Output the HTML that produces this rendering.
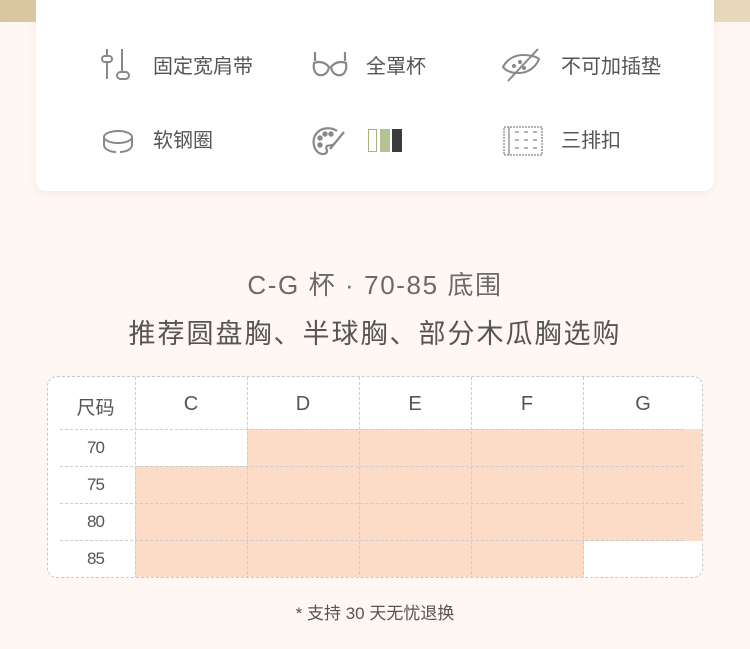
<!DOCTYPE html>
<html><head><meta charset="utf-8">
<style>
*{margin:0;padding:0;box-sizing:border-box}
body{width:750px;height:649px;background:#fff7f3;position:relative;overflow:hidden;font-family:"Liberation Sans","Noto Sans CJK SC",sans-serif;color:#555}
.top{position:absolute;left:0;top:0;width:750px;height:22px;background:linear-gradient(90deg,#d9c6a0,#e6d6b8 50%,#e8d9bd)}
.card{position:absolute;left:36px;top:-10px;width:678px;height:201px;background:#fff;border-radius:10px;box-shadow:0 2px 8px rgba(220,190,170,.25)}
.it{position:absolute;font-size:20px;color:#555;line-height:24px}
.ic{position:absolute}
.h1{position:absolute;left:0;width:750px;top:265px;text-align:center;font-size:26px;color:#6a6a6a;letter-spacing:1.6px}
.h2{position:absolute;left:0;width:750px;top:312px;text-align:center;font-size:27px;color:#555;letter-spacing:2px}
.tbl{position:absolute;left:47px;top:376px;width:656px;height:202px;border:1px dashed #c8c8c8;border-radius:10px;background:#fff;overflow:hidden}
.p{position:absolute;background:#fddcc7}
.vl{position:absolute;top:0;height:202px;border-left:1px dashed #ccc}
.hl{position:absolute;left:12px;width:624px;border-top:1px dashed #ccc}
.t{position:absolute;text-align:center;color:#555}
.foot{position:absolute;left:0;width:750px;top:599px;text-align:center;font-size:17px;color:#555}
</style></head><body>
<div class="top"></div>
<div class="card"></div>
<svg class="ic" style="left:100px;top:47px" width="34" height="36" viewBox="0 0 34 36" fill="none" stroke="#888" stroke-width="2">
<line x1="7" y1="2" x2="7" y2="9"/><rect x="2" y="9" width="10" height="6" rx="3"/><line x1="7" y1="15" x2="7" y2="32"/>
<line x1="22" y1="2" x2="22" y2="24"/><rect x="17" y="25" width="12" height="7" rx="3.5"/></svg>
<div class="it" style="left:153px;top:55px">固定宽肩带</div>
<svg class="ic" style="left:311px;top:50px" width="38" height="30" viewBox="0 0 38 30" fill="none" stroke="#888" stroke-width="2.2">
<path d="M4 2v9M34 2v9"/><path d="M3 13c5-2 11-1 15 4-1 6-5 9-10 8-4-1-6-6-5-12z"/><path d="M35 13c-5-2-11-1-15 4 1 6 5 9 10 8 4-1 6-6 5-12z"/></svg>
<div class="it" style="left:366px;top:55px">全罩杯</div>
<svg class="ic" style="left:500px;top:47px" width="42" height="36" viewBox="0 0 42 36" fill="none" stroke="#888" stroke-width="2">
<path d="M3 20c4-8 12-12 20-12 8 0 14 2 16 4-3 8-11 14-20 14C11 26 6 24 3 20z"/><line x1="8" y1="34" x2="38" y2="2"/>
<circle cx="14" cy="19" r="1" fill="#888"/><circle cx="20" cy="15" r="1" fill="#888"/><circle cx="24" cy="21" r="1" fill="#888"/></svg>
<div class="it" style="left:561px;top:55px">不可加插垫</div>
<svg class="ic" style="left:101px;top:127px" width="36" height="30" viewBox="0 0 36 30" fill="none" stroke="#888" stroke-width="2">
<ellipse cx="17" cy="10" rx="14" ry="6"/><path d="M3 10v8c0 4 6 7 12 7M31 10v8c0 4-6 7-12 7"/></svg>
<div class="it" style="left:153px;top:129px">软钢圈</div>
<svg class="ic" style="left:311px;top:125px" width="36" height="32" viewBox="0 0 36 32" fill="none" stroke="#888" stroke-width="2.2">
<path d="M26 6C20 2 10 2 5 9 1 15 2 24 8 28c4 2 8 1 8-2 0-2-2-3 0-5 2-1 5 0 7-2"/><path d="M19 24L33 7"/><circle cx="9" cy="13" r="1.6" fill="#888"/><circle cx="14" cy="9" r="1.6" fill="#888"/><circle cx="20" cy="9" r="1.6" fill="#888"/><circle cx="9" cy="20" r="1.6" fill="#888"/></svg>
<div style="position:absolute;left:368px;top:129px;width:9px;height:23px;border:1.5px solid #aab07a;background:#fff"></div>
<div style="position:absolute;left:380px;top:129px;width:10px;height:23px;background:#b4c294"></div>
<div style="position:absolute;left:392px;top:129px;width:10px;height:23px;background:#3c3c3c"></div>
<svg class="ic" style="left:502px;top:125px" width="42" height="32" viewBox="0 0 42 32" fill="none" stroke="#999" stroke-width="1.5">
<rect x="2" y="2" width="38" height="28" stroke-dasharray="2 1"/><line x1="7" y1="2" x2="7" y2="30"/>
<path d="M13 7h4M22 7h4M31 7h4M13 15h4M22 15h4M31 15h4M13 23h4M22 23h4M31 23h4"/></svg>
<div class="it" style="left:561px;top:129px">三排扣</div>

<div class="h1">C-G 杯 · 70-85 底围</div>
<div class="h2">推荐圆盘胸、半球胸、部分木瓜胸选购</div>

<div class="tbl">
<div class="p" style="left:199px;top:52px;width:457px;height:112px"></div>
<div class="p" style="left:87px;top:89px;width:112px;height:113px"></div>
<div class="p" style="left:199px;top:164px;width:337px;height:38px"></div>
<div class="vl" style="left:87px"></div><div class="vl" style="left:199px"></div><div class="vl" style="left:311px"></div><div class="vl" style="left:423px"></div><div class="vl" style="left:535px"></div>
<div class="hl" style="top:52px"></div><div class="hl" style="top:89px"></div><div class="hl" style="top:126px"></div><div class="hl" style="top:163px"></div>
<div class="t" style="left:0;width:95px;top:16px;font-size:19px">尺码</div>
<div class="t" style="left:87px;width:112px;top:16px;font-size:20px">C</div>
<div class="t" style="left:199px;width:112px;top:16px;font-size:20px">D</div>
<div class="t" style="left:311px;width:112px;top:16px;font-size:20px">E</div>
<div class="t" style="left:423px;width:112px;top:16px;font-size:20px">F</div>
<div class="t" style="left:535px;width:120px;top:16px;font-size:20px">G</div>
<div class="t" style="left:0;width:95px;top:61px;font-size:17px;letter-spacing:-1px">70</div>
<div class="t" style="left:0;width:95px;top:98px;font-size:17px;letter-spacing:-1px">75</div>
<div class="t" style="left:0;width:95px;top:135px;font-size:17px;letter-spacing:-1px">80</div>
<div class="t" style="left:0;width:95px;top:172px;font-size:17px;letter-spacing:-1px">85</div>
</div>
<div class="foot">* 支持 30 天无忧退换</div>
</body></html>
